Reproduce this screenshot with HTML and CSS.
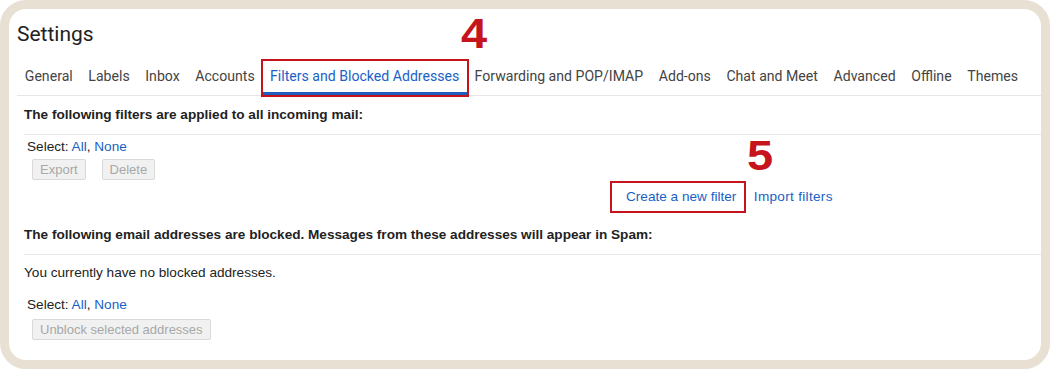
FILE: index.html
```html
<!DOCTYPE html>
<html lang="en">
<head>
    <meta charset="UTF-8">
    <title>Settings</title>
    <link rel="stylesheet" href="styles.css">
</head>
<body>
<div class="frame">
    <h1 class="title">Settings</h1>
    <ul class="tabs">
        <li>General</li>
        <li>Labels</li>
        <li>Inbox</li>
        <li>Accounts</li>
        <li class="active mark">Filters and Blocked Addresses<span class="step step4">4</span></li>
        <li>Forwarding and POP/IMAP</li>
        <li>Add-ons</li>
        <li>Chat and Meet</li>
        <li>Advanced</li>
        <li>Offline</li>
        <li>Themes</li>
    </ul>

    <div class="section">
        <h2 class="head">The following filters are applied to all incoming mail:</h2>
        <div class="select">Select: <a href="#">All</a>, <a href="#">None</a></div>
        <div class="btns">
            <button disabled>Export</button>
            <button disabled>Delete</button>
        </div>
        <div class="actions">
            <a href="#" class="mark create">Create a new filter<span class="step step5">5</span></a>
            <a href="#" class="import">Import filters</a>
        </div>
    </div>

    <div class="section">
        <h2 class="head">The following email addresses are blocked. Messages from these addresses will appear in Spam:</h2>
        <p class="empty">You currently have no blocked addresses.</p>
        <div class="select">Select: <a href="#">All</a>, <a href="#">None</a></div>
        <div class="btns">
            <button disabled>Unblock selected addresses</button>
        </div>
    </div>
</div>
</body>
</html>
```

FILE: styles.css
```css
*{
    margin:0;
    padding:0;
    box-sizing: border-box;
}
body{
    background: #fff;
    font-family: "Liberation Sans", Arial, sans-serif;
    font-size: 13.6px;
    color: #222;
}
a{
    color: #1a5fc4;
    text-decoration: none;
}
.frame{
    width: 1050px;
    height: 369px;
    border: 9px solid #e9e0d4;
    border-radius: 26px;
    background: #fff;
}
.title{
    font-family: Roboto, "Liberation Sans", sans-serif;
    font-weight: 400;
    font-size: 21px;
    color: #222;
    padding: 13px 0 0 8px;
    height: 52px;
}
.tabs{
    display: flex;
    list-style: none;
    margin-left: 8px;
    border-bottom: 1px solid #e6e6e6;
    height: 35px;
}
.tabs li{
    font-family: Roboto, "Liberation Sans", sans-serif;
    font-size: 14.1px;
    color: #444;
    padding: 0 7.8px;
    line-height: 31px;
    height: 34px;
    border-bottom: 3px solid transparent;
    white-space: nowrap;
}
.tabs li.active{
    color: #1a62c6;
    border-bottom-color: #1f5fbf;
    padding: 0 7.5px;
}
.mark{
    position: relative;
    outline: 2.5px solid #c5141c;
}
.step{
    position: absolute;
    font-family: "Liberation Sans", Arial, sans-serif;
    font-weight: 700;
    font-size: 42px;
    color: #c5141c;
    line-height: 1;
    transform: scaleX(1.12);
    transform-origin: left top;
}
.step4{
    left: 198px;
    top: -48px;
}
.step5{
    left: 135px;
    top: -48px;
}
.section{
    margin-left: 15px;
}
.head{
    font-size: 13.6px;
    font-weight: 700;
    color: #222;
    line-height: 16px;
    padding: 11px 0;
    border-bottom: 1px solid #e6e6e6;
}
.select{
    margin: 4px 0 0 3px;
    line-height: 16px;
}
.btns{
    display: flex;
    gap: 16px;
    margin: 4px 0 0 8px;
}
.btns button{
    font-family: "Liberation Sans", Arial, sans-serif;
    font-size: 13px;
    color: #a8a8a8;
    background: #f1f1f1;
    border: 1px solid #d9d9d9;
    border-radius: 2px;
    height: 21px;
    padding: 0 7px;
}
.actions{
    display: flex;
    gap: 10px;
    margin: 3px 0 5px 588px;
    line-height: 28px;
    height: 28px;
}
.actions .create{
    padding: 0 7.5px 0 14px;
    display: block;
    height: 28px;
}
.actions .import{
    letter-spacing: 0.3px;
}
.empty{
    margin: 10px 0 0;
    line-height: 16px;
}
.section + .section .select{
    margin-top: 16px;
}
.section + .section .btns{
    margin-top: 6px;
}
```
